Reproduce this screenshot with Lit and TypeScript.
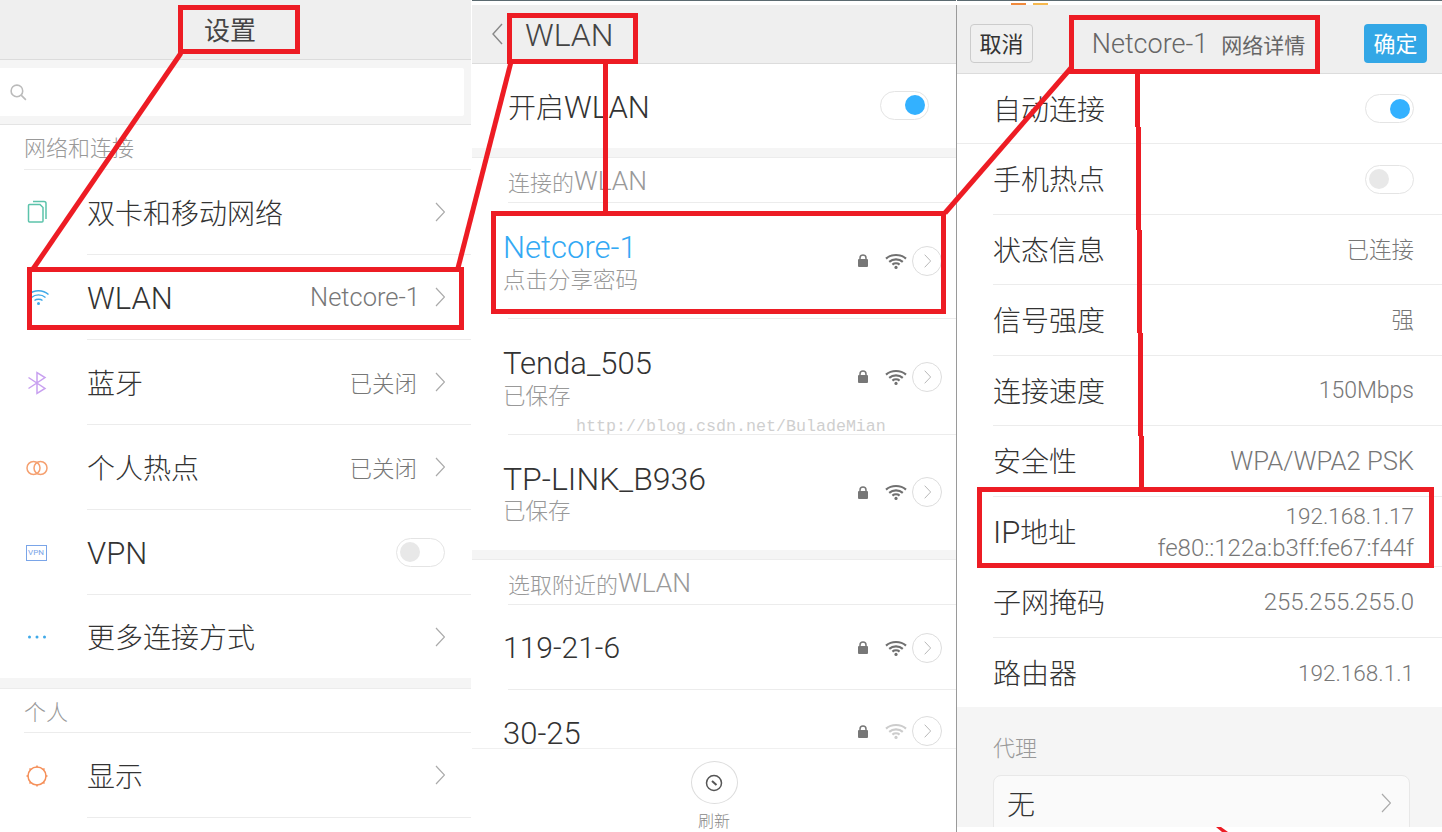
import { LitElement, html, css, svg } from "lit";
import { customElement } from "lit/decorators.js";

const chev = (c = "") => html`<svg class="chev ${c}" viewBox="0 0 10 20"><polyline points="1,1 9.5,10 1,19"></polyline></svg>`;

const toggle = (on: boolean) => html`<span class="toggle ${on ? "on" : ""}"><i></i></span>`;

const lat = (s: string) => html`<span class="lat">${s}</span>`;

const wifi = (color: string) => html`<svg class="wifi" viewBox="0 0 22 16" fill="none" stroke=${color} stroke-width="2.200">
  <path d="M1 5.600C6.500 .8 15.500 .8 21 5.600"></path>
  <path d="M4.200 8.800C8 5.600 14 5.600 17.800 8.800"></path>
  <path d="M7.400 11.600C9.400 10 12.600 10 14.600 11.600"></path>
  <circle cx="11" cy="14.400" r="1.600" fill=${color} stroke="none"></circle>
</svg>`;

const lock = html`<svg class="lock" viewBox="0 0 10 13"><path d="M2 6V4a3 3 0 0 1 6 0v2" fill="none" stroke="#777" stroke-width="1.500"></path><rect x="0" y="5" width="10" height="8" rx="1" fill="#777"></rect></svg>`;

const icons: Record<string, unknown> = {
  sim: html`<svg class="ico lift" viewBox="0 0 24 24" fill="none" stroke="#5cc3ab" stroke-width="1.500"><path d="M4.500 5.500h10.500l3 3V22a1 1 0 0 1-1 1H4.500a1 1 0 0 1-1-1V6.500a1 1 0 0 1 1-1z"></path><path d="M8 2.500h11a2 2 0 0 1 2 2V20"></path></svg>`,
  wifi: html`<svg class="ico" viewBox="0 0 24 24" fill="none" stroke="#3fa9e8" stroke-width="1.400"><path d="M3.500 8.500C9 3.500 18 3.500 23.500 8.500"></path><path d="M6.500 11.500C10.500 8 16.500 8 20.500 11.500"></path><path d="M9.500 14.500C11.500 12.800 15.500 12.800 17.500 14.500"></path><circle cx="13.500" cy="17.500" r="1.500" fill="#3fa9e8" stroke="none"></circle></svg>`,
  bt: html`<svg class="ico" viewBox="0 0 24 24" fill="none" stroke="#c8a0f0" stroke-width="1.500"><path d="M3.500 6.500 20 17.500 12 22.500V1.500L20 6.500 3.500 17.500"></path></svg>`,
  rings: html`<svg class="ico" viewBox="0 0 24 24" fill="none" stroke="#f5a070" stroke-width="1.500"><circle cx="8.500" cy="12" r="6.500"></circle><circle cx="15.500" cy="12" r="6.500"></circle></svg>`,
  vpn: html`<span class="vpn">VPN</span>`,
  dots: html`<svg class="ico" viewBox="0 0 24 24" fill="#3fa9e8"><circle cx="4.500" cy="12" r="1.500"></circle><circle cx="12" cy="12" r="1.500"></circle><circle cx="19.500" cy="12" r="1.500"></circle></svg>`,
  sun: html`<svg class="ico" viewBox="0 0 24 24" fill="none" stroke="#f5905a" stroke-width="1.500"><circle cx="12" cy="12" r="9"></circle><path d="M12 1.500v2M12 20.500v2M1.500 12h2M20.500 12h2M4.500 4.500l1.500 1.500M18 18l1.500 1.500M4.500 19.500 6 18M18 6l1.500-1.500"></path></svg>`,
};

const setRow = (icon: string, label: unknown, value: unknown = "", last = false, tog = false) => html`
  <div class="s-row ${last ? "last" : ""}">
    <span class="icobox">${icons[icon]}</span>
    <div class="s-body">
      <span class="label">${label}</span>
      <span class="val">${value}</span>
      ${tog ? toggle(false) : chev()}
    </div>
  </div>`;

const net = (name: string, sub = "", cls = "", h = "tall", weak = false) => html`
  <div class="n-row ${h}">
    <div class="n-text">
      <span class="n-name ${cls}">${name}</span>
      ${sub ? html`<span class="n-sub">${sub}</span>` : ""}
    </div>
    ${lock}
    ${wifi(weak ? "#ccc" : "#707070")}
    <span class="circle">${chev("small")}</span>
  </div>`;

const det = (label: unknown, value: unknown, cls = "", vcls = "") => html`
  <div class="d-row ${cls}">
    <span class="label">${label}</span>
    <span class="val d-val ${vcls}">${value}</span>
  </div>`;

const red = "#ed1c24";
const overlay = svg`
  <g fill="none" stroke=${red} stroke-width="5">
    <rect x="180.500" y="7.500" width="117" height="44"></rect>
    <rect x="29.500" y="269.500" width="432" height="58"></rect>
    <rect x="509.500" y="15.500" width="126" height="46"></rect>
    <rect x="493.500" y="213.500" width="450" height="98"></rect>
    <rect x="1071.500" y="17.500" width="246" height="54"></rect>
    <rect x="979.500" y="489.500" width="452" height="76"></rect>
    <path d="M181 53 33 269"></path>
    <path d="M511 62 458 268"></path>
    <path d="M605.500 63V212"></path>
    <path d="M945 213 1071 68"></path>
    <path d="M1137.500 74V127M1138.500 127V230M1139.500 230V333M1140.500 333V436M1141.500 436V488"></path>
  </g>
  <polygon points="1216,827 1221,827 1228,832 1222,832" fill=${red}></polygon>`;

@customElement("app-root")
export class AppRoot extends LitElement {
  static styles = css`
    :host { display: block; width: 1442px; height: 832px; position: relative; overflow: hidden; background: #fff;
      font-family: Roboto, "Noto Sans CJK SC", sans-serif; color: #333; font-weight: 300; }
    * { box-sizing: border-box; }
    .page { display: flex; height: 832px; }
    .p1 { width: 471px; flex: none; }
    .p2 { width: 484px; margin-left: 1px; flex: none; }
    .p3 { width: 485px; margin-left: 1px; flex: none; position: relative; }
    .p3::before { content: ""; position: absolute; left: -1px; top: 5px; bottom: 0; width: 1px; background: #9a9a9a; }
    .strip { height: 5px; border-top: 1px solid #5b6a70; display: flex; align-items: flex-end; gap: 7px; padding-left: 54px; }
    .strip i { width: 15px; height: 2px; background: #f08a3c; }
    .strip i + i { background: #f6b84e; }
    .hd { background: #efefef; border-bottom: 1px solid #dcdcdc; display: flex; align-items: center; font-weight: 400; color: #444; }
    .hd1 { height: 60px; justify-content: center; font-size: 26px; padding-bottom: 2px; padding-right: 11px; }
    .hd2 { height: 59px; font-size: 32px; padding-left: 20px; padding-top: 2px; gap: 22px; font-weight: 300; }
    .hd3 { height: 69px; padding: 9px 15px 0 13px; justify-content: space-between; }
    .back { width: 11px; height: 22px; fill: none; stroke: #888; stroke-width: 1.400; margin-top: -3px; }
    .btn { width: 63px; height: 39px; border-radius: 4px; display: flex; align-items: center; justify-content: center; font-size: 22px; padding-bottom: 4px; }
    .btn.cancel { background: #f0f0f0; border: 1px solid #ccc; color: #333; }
    .btn.ok { background: #33a7e6; color: #fff; }
    .hd3 .title { font-size: 27px; color: #666; font-weight: 300; display: flex; align-items: center; gap: 13px; }
    .hd3 .title b { font-size: 21px; font-weight: 400; }

    .search { height: 65px; background: #f5f5f5; border-bottom: 1px solid #e4e4e4; padding: 8px 7px 8px 0; }
    .search div { height: 48px; background: #fff; border-radius: 0 2px 2px 0; display: flex; align-items: center; padding-left: 9px; }
    .search svg { width: 19px; height: 19px; fill: none; stroke: #bbb; stroke-width: 1.500; }

    .sec { font-size: 22px; color: #999; display: flex; align-items: center; padding-bottom: 2px; }
    .sec .lat { font-size: 26.400px; }
    .sec1 { height: 45px; margin-left: 24px; border-bottom: 1px solid #ececec; }
    .sec1.short { height: 44px; }
    .band { background: #f5f5f5; border-bottom: 1px solid #ececec; }
    .band.b11 { height: 11px; }
    .band.b10 { height: 10px; }
    .label { font-size: 28px; line-height: 40px; color: #333; white-space: nowrap; }
    .label .lat { font-size: 31px; }
    .val { font-size: 22.500px; color: #777; white-space: nowrap; }
    .val .lat { font-size: 25.500px; margin-right: -3px; }
    .chev { width: 10px; height: 20px; fill: none; stroke: #aaa; stroke-width: 1.200; flex: none; }
    .chev.small { width: 7px; height: 14px; }

    .s-row { height: 85px; display: flex; align-items: stretch; padding-left: 25px; }
    .s-row.last { height: 83px; }
    .s-row.last .s-body { border-bottom: 0; }
    .icobox { width: 24px; margin-right: 38px; flex: none; align-self: center; display: flex; align-items: center; justify-content: center; }
    .ico { width: 24px; height: 24px; display: block; }
    .ico.lift { margin-top: -4px; }
    .vpn { width: 21px; height: 16px; border: 1px solid #7aa5e8; color: #7aa5e8; font-size: 8px; display: flex; align-items: center; justify-content: center; font-weight: 400; margin-left: -2px; }
    .s-body { flex: 1; display: flex; align-items: center; gap: 18px; border-bottom: 1px solid #ececec; padding-right: 26px; }
    .s-body .label { flex: 1; padding-top: 5px; }

    .toggle { width: 49px; height: 29px; border: 1px solid #e4e4e4; border-radius: 15px; display: flex; align-items: center; padding: 0 3px; flex: none; }
    .toggle i { width: 20px; height: 20px; border-radius: 50%; background: #e8e8e8; }
    .toggle.on { justify-content: flex-end; }
    .toggle.on i { background: #33b1ff; }

    .o-row { height: 84px; display: flex; align-items: center; justify-content: space-between; padding: 0 27px 0 36px; }
    .o-row .label { padding-top: 4px; }
    .o-row .toggle { margin-bottom: 2px; }
    .p2 .sec { margin-left: 36px; border-bottom: 1px solid #ececec; height: 45px; padding: 2px 0 0; }
    .n-row { display: flex; align-items: center; padding-left: 31px; padding-right: 14px; position: relative; }
    .n-row::after { content: ""; position: absolute; left: 36px; right: 0; bottom: 0; height: 1px; background: #ececec; }
    .n-row.tall { height: 116px; padding-bottom: 1px; }
    .n-row.tall.nb { height: 115px; }
    .n-row.tall .n-name { padding-top: 2px; }
    .n-row.mid { height: 85px; }
    .n-row.short { height: 58px; align-items: flex-start; padding-top: 26px; }
    .n-row.nb::after { display: none; }
    .n-row.short .n-text { margin-top: 3px; }
    .n-row.short .n-name { line-height: 29px; }
    .n-row.short .lock { margin-top: 9px; }
    .n-row.short .wifi { margin-top: 7px; }
    .n-text { flex: 1; display: flex; flex-direction: column; }
    .n-name { font-size: 31px; line-height: 38px; color: #333; white-space: nowrap; }
    .n-name.blue { color: #33a9f4; }
    .n-name.wide { font-size: 32px; }
    .n-name.narrow { font-size: 30px; }
    .n-sub { font-size: 22.500px; line-height: 30px; color: #999; margin-top: -2px; }
    .lock { width: 10px; height: 13px; margin-right: 17px; flex: none; }
    .wifi { width: 22px; height: 16px; margin-right: 5px; flex: none; }
    .circle { width: 30px; height: 30px; border-radius: 50%; border: 1px solid #ddd; display: flex; align-items: center; justify-content: center; flex: none; }
    .foot { height: 84px; display: flex; flex-direction: column; align-items: center; padding-top: 12px; border-top: 1px solid #f0f0f0; }
    .foot .c { width: 47px; height: 47px; border-radius: 50%; border: 1px solid #ddd; display: flex; align-items: center; justify-content: center; }
    .foot svg { width: 18px; height: 18px; fill: none; stroke: #555; stroke-width: 1.500; }
    .foot span { font-size: 16px; color: #888; margin-top: 4px; }

    .d-row { height: 70px; display: flex; align-items: center; justify-content: space-between; margin-left: 36px; padding-right: 28px; border-bottom: 1px solid #ececec; }
    .d-row:nth-child(even) { height: 71px; }
    .d-row .label { padding-top: 4px; }
    .d-row.full { margin-left: 0; padding-left: 36px; }
    .d-row.nb { border-bottom: 0; height: 69px; }
    .d-val { text-align: right; line-height: 32px; }
    .d-val div { line-height: 31px; }
    .d-val div:first-child { padding-top: 1px; }
    .d-val .v24 { font-size: 24px; line-height: 32px; }
    .d-val.v23 { font-size: 23px; }
    .d-val.v24 { font-size: 24px; }
    .d-val.v26 { font-size: 25.600px; }
    .proxy { height: 120px; background: #f5f5f5; padding: 26px 32px 0 36px; overflow: hidden; }
    .proxy .sec { height: 28px; margin-bottom: 14px; }
    .pbox { height: 70px; background: #fafafa; border: 1px solid #e8e8e8; border-radius: 8px; display: flex; align-items: flex-start; justify-content: space-between; padding: 10px 18px 0 13px; }
    .pbox .chev { margin-top: 7px; }

    .mark { position: absolute; left: 576px; top: 417px; font-family: "Liberation Mono", monospace; font-size: 16.670px; color: #cfcfcf; font-weight: 400; white-space: nowrap; }
    .ann { position: absolute; inset: 0; width: 1442px; height: 832px; pointer-events: none; }
  `;

  render() {
    return html`
      <div class="page">
        <section class="p1">
          <div class="hd hd1">设置</div>
          <div class="search"><div><svg viewBox="0 0 18 18"><circle cx="7.500" cy="7.500" r="5.500"></circle><path d="M11.500 11.500 16 16"></path></svg></div></div>
          <div class="sec sec1">网络和连接</div>
          ${setRow("sim", "双卡和移动网络")}
          ${setRow("wifi", lat("WLAN"), lat("Netcore-1"))}
          ${setRow("bt", "蓝牙", "已关闭")}
          ${setRow("rings", "个人热点", "已关闭")}
          ${setRow("vpn", lat("VPN"), "", false, true)}
          ${setRow("dots", "更多连接方式", "", true)}
          <div class="band b11"></div>
          <div class="sec sec1 short">个人</div>
          ${setRow("sun", "显示")}
        </section>

        <section class="p2">
          <div class="strip"></div>
          <div class="hd hd2"><svg class="back" viewBox="0 0 11 22"><polyline points="10,1 1,11 10,21"></polyline></svg><span>WLAN</span></div>
          <div class="o-row"><span class="label">开启${lat("WLAN")}</span>${toggle(true)}</div>
          <div class="band b10"></div>
          <div class="sec">连接的${lat("WLAN")}</div>
          ${net("Netcore-1", "点击分享密码", "blue")}
          ${net("Tenda_505", "已保存")}
          ${net("TP-LINK_B936", "已保存", "wide", "tall nb")}
          <div class="band b10"></div>
          <div class="sec">选取附近的${lat("WLAN")}</div>
          ${net("119-21-6", "", "narrow", "mid")}
          ${net("30-25", "", "", "short nb", true)}
          <div class="foot">
            <div class="c"><svg viewBox="0 0 18 18"><circle cx="9" cy="9" r="7.500"></circle><path d="M7 7l4.500 4" stroke-width="2"></path></svg></div>
            <span>刷新</span>
          </div>
        </section>

        <section class="p3">
          <div class="strip"><i></i><i></i></div>
          <div class="hd hd3">
            <span class="btn cancel">取消</span>
            <span class="title">Netcore-1 <b>网络详情</b></span>
            <span class="btn ok">确定</span>
          </div>
          <div class="rows">
            <div class="d-row full"><span class="label">自动连接</span>${toggle(true)}</div>
            <div class="d-row"><span class="label">手机热点</span>${toggle(false)}</div>
            ${det("状态信息", "已连接")}
            ${det("信号强度", "强")}
            ${det("连接速度", "150Mbps", "", "v23")}
            ${det("安全性", "WPA/WPA2 PSK", "", "v26")}
            ${det(html`<span class="lat">IP</span>地址`, html`<div>192.168.1.17</div><div class="v24">fe80::122a:b3ff:fe67:f44f</div>`)}
            ${det("子网掩码", "255.255.255.0", "", "v24")}
            ${det("路由器", "192.168.1.1", "nb")}
          </div>
          <div class="proxy">
            <div class="sec">代理</div>
            <div class="pbox"><span class="label">无</span>${chev()}</div>
          </div>
        </section>
      </div>
      <div class="mark">http://blog.csdn.net/BuladeMian</div>
      <svg class="ann" viewBox="0 0 1442 832">${overlay}</svg>
    `;
  }
}
